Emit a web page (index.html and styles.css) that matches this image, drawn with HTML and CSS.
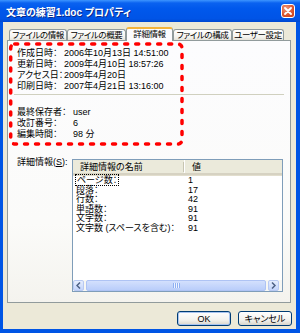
FILE: index.html
```html
<!DOCTYPE html>
<html lang="ja">
<head>
    <meta charset="UTF-8">
    <title>文章の練習1.doc プロパティ</title>
    <link rel="stylesheet" href="styles.css">
</head>
<body>

    <div class="window">
        <div class="titlebar">
            <span class="title">文章の練習1.doc プロパティ</span>
            <span class="close-button">
                <svg width="8" height="8" viewBox="0 0 8 8">
                    <path d="M1 1 L7 7 M7 1 L1 7" stroke="#ffffff" stroke-width="1.8" stroke-linecap="round"/>
                </svg>
            </span>
        </div>

        <div class="client">
            <div class="tabs">
                <div class="tab tab-info">ファイルの情報</div>
                <div class="tab tab-summary">ファイルの概要</div>
                <div class="tab tab-detail selected">詳細情報</div>
                <div class="tab tab-contents">ファイルの構成</div>
                <div class="tab tab-custom">ユーザー設定</div>
            </div>

            <div class="panel">
                <div class="group dates">
                    <div class="row"><span class="label">作成日時：</span><span class="value">2006年10月13日 14:51:00</span></div>
                    <div class="row"><span class="label">更新日時：</span><span class="value">2009年4月10日 18:57:26</span></div>
                    <div class="row"><span class="label">アクセス日：</span><span class="value">2009年4月20日</span></div>
                    <div class="row"><span class="label">印刷日時：</span><span class="value">2007年4月21日 13:16:00</span></div>
                </div>

                <div class="separator"></div>

                <div class="group stats">
                    <div class="row"><span class="label">最終保存者：</span><span class="value">user</span></div>
                    <div class="row"><span class="label">改訂番号：</span><span class="value">6</span></div>
                    <div class="row"><span class="label">編集時間：</span><span class="value">98 分</span></div>
                </div>

                <div class="details">
                    <div class="details-label">詳細情報(<u>S</u>):</div>
                    <div class="listbox">
                        <div class="list-header">
                            <span class="col-name">詳細情報の名前</span>
                            <span class="col-value">値</span>
                        </div>
                        <div class="list-body">
                            <div class="list-row"><span class="col-name"><span class="focused">ページ数：</span></span><span class="col-value">1</span></div>
                            <div class="list-row"><span class="col-name">段落：</span><span class="col-value">17</span></div>
                            <div class="list-row"><span class="col-name">行数：</span><span class="col-value">42</span></div>
                            <div class="list-row"><span class="col-name">単語数：</span><span class="col-value">91</span></div>
                            <div class="list-row"><span class="col-name">文字数：</span><span class="col-value">91</span></div>
                            <div class="list-row"><span class="col-name">文字数 (スペースを含む)：</span><span class="col-value">91</span></div>
                        </div>
                        <div class="hscroll">
                            <span class="scroll-btn">
                                <svg width="5" height="7" viewBox="0 0 5 7"><path d="M4 0.5 L1 3.5 L4 6.5" fill="none" stroke="#4d6185" stroke-width="1.5"/></svg>
                            </span>
                            <span class="scroll-thumb"><span class="grip"></span></span>
                            <span class="scroll-btn">
                                <svg width="5" height="7" viewBox="0 0 5 7"><path d="M1 0.5 L4 3.5 L1 6.5" fill="none" stroke="#4d6185" stroke-width="1.5"/></svg>
                            </span>
                        </div>
                    </div>
                </div>
            </div>

            <div class="buttons">
                <button class="dlg-button default">OK</button>
                <button class="dlg-button">キャンセル</button>
            </div>
        </div>

        <!-- red annotation drawn over the date block -->
        <svg class="annotation" width="300" height="333" viewBox="0 0 300 333">
            <rect x="10.7" y="44" width="171.3" height="100" rx="4" fill="none"
                  stroke="#ff0000" stroke-width="3.5" stroke-dasharray="3 8" stroke-linecap="round"/>
        </svg>
    </div>

</body>
</html>
```

FILE: styles.css
```css
* {
    box-sizing: border-box;
}

body {
    margin: 0;
    font-family: "Liberation Sans", "Noto Sans CJK JP", sans-serif;
    font-size: 9px;
    font-feature-settings: "palt";
    color: #000000;
}

.window {
    position: relative;
    width: 300px;
    height: 333px;
    display: flex;
    flex-direction: column;
    background-color: #0055e5;
    padding: 0 4px 4px 3px;
}

.titlebar {
    height: 22px;
    margin: 0 -4px 0 -3px;
    padding: 0 5px 0 6px;
    display: flex;
    align-items: center;
    justify-content: space-between;
    background: linear-gradient(#3d95ff 0, #0a62f0 3px, #0058ec 40%, #0054e6 85%, #0048d0 100%);
}

.title {
    color: #ffffff;
    font-weight: bold;
    font-size: 10px;
    text-shadow: 1px 1px 0 #0a2a8c;
}

.close-button {
    width: 14px;
    height: 14px;
    border: 1px solid #ffffff;
    border-radius: 3px;
    background: radial-gradient(circle at 35% 30%, #f09a7c, #d9522c 60%, #c2411c);
    display: flex;
    align-items: center;
    justify-content: center;
}

.client {
    flex: 1;
    display: flex;
    flex-direction: column;
    background-color: #ece9d8;
    padding: 5px 5px 0 4px;
}

/* tab strip */
.tabs {
    height: 13px;
    display: flex;
    align-items: flex-end;
    padding-left: 2px;
}

.tab {
    height: 11px;
    border: 1px solid #919b9c;
    border-bottom: none;
    border-radius: 3px 3px 0 0;
    background: linear-gradient(#ffffff, #f4f3ee 70%, #e4e2d8);
    text-align: center;
    font-size: 8.5px;
    line-height: 10px;
    white-space: nowrap;
    letter-spacing: -0.4px;
    overflow: hidden;
}

.tab-info { width: 58px; }
.tab-summary { width: 59px; }
.tab-detail { width: 47px; }
.tab-contents { width: 59px; }
.tab-custom { width: 52px; }

.tab.selected {
    height: 14px;
    margin-bottom: -1px;
    position: relative;
    z-index: 1;
    border-top: 2px solid #f4b33a;
    background: #fcfcfe;
    line-height: 11px;
}

.panel {
    height: 263px;
    border: 1px solid #919b9c;
    background: linear-gradient(#fcfcfe, #fbfbf9 70%, #f4f3ee);
    padding: 7px 6px 0 6px;
    display: flex;
    flex-direction: column;
}

.row {
    height: 11px;
    line-height: 11px;
    display: flex;
    padding-left: 3px;
    white-space: nowrap;
}

.dates .label {
    width: 47px;
}

.stats .label {
    width: 56px;
}

.separator {
    margin-top: 2px;
    border-top: 1px solid #d0d0bf;
}

.stats {
    margin-top: 12px;
}

/* detail list */
.details {
    margin-top: 17px;
    display: flex;
    align-items: flex-start;
}

.details-label {
    width: 58px;
    padding-left: 3px;
    line-height: 11px;
    white-space: nowrap;
}

.listbox {
    margin-top: 2px;
    width: 211px;
    height: 133px;
    border: 1px solid #7f9db9;
    background-color: #ffffff;
    display: flex;
    flex-direction: column;
}

.list-header {
    height: 15px;
    display: flex;
    align-items: center;
    background-color: #ebeadb;
    border-bottom: 2px solid #d6d2c2;
    box-shadow: 0 1px 0 #e2decd;
}

.list-header .col-name {
    width: 111px;
    padding-left: 7px;
    border-right: 1px solid #c7c5b2;
    line-height: 10px;
}

.list-header .col-value {
    padding-left: 7px;
    border-left: 1px solid #ffffff;
}

.list-body {
    flex: 1;
    padding-top: 1px;
}

.list-row {
    height: 9.6px;
    line-height: 9.6px;
    display: flex;
    white-space: nowrap;
}

.list-row .col-name {
    width: 111px;
    padding-left: 3px;
}

.list-row .col-value {
    padding-left: 4px;
}

.focused {
    outline: 1px dotted #000000;
    padding: 0 1px;
}

.hscroll {
    height: 11px;
    display: flex;
    gap: 2px;
    padding-right: 3px;
    background-color: #f7f7f3;
}

.scroll-btn {
    width: 11px;
    border: 1px solid #b8c9f2;
    border-radius: 2px;
    background: linear-gradient(#e6eefe, #c3d4fb);
    display: flex;
    align-items: center;
    justify-content: center;
}

.scroll-thumb {
    flex: 1;
    border: 1px solid #aec3f4;
    border-radius: 2px;
    background: linear-gradient(#d3e0fd, #b9cdfa);
    display: flex;
    align-items: center;
    justify-content: center;
}

.grip {
    width: 7px;
    height: 5px;
    background: repeating-linear-gradient(90deg, #8fb0f2 0 1px, #eef3ff 1px 2px);
}

/* dialog buttons */
.buttons {
    margin-top: 8px;
    display: flex;
    justify-content: flex-end;
    gap: 7px;
    margin-right: -1px;
}

.dlg-button {
    width: 54px;
    height: 15px;
    padding: 0;
    font-family: inherit;
    font-size: 9px;
    font-feature-settings: "palt";
    border: 1px solid #003c74;
    border-radius: 3px;
    background: linear-gradient(#ffffff, #f3f2ee 60%, #d9d5cb);
    color: #000000;
}

.dlg-button.default {
    box-shadow: inset 0 0 0 1px #a8c4f0;
}

.annotation {
    position: absolute;
    left: 0;
    top: 0;
    pointer-events: none;
}
```
